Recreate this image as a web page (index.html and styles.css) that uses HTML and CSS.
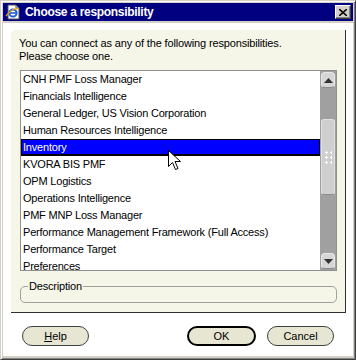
FILE: index.html
```html
<!DOCTYPE html>
<html lang="en">
<head>
    <meta charset="UTF-8">
    <title>Choose a responsibility</title>
    <link rel="stylesheet" href="styles.css">
</head>
<body>

    <div class="window">
        <!-- Title bar -->
        <div class="titlebar">
            <svg class="app-icon" width="16" height="16" viewBox="0 0 16 16">
                <path d="M3 1h8l3 3v11H3z" fill="#fff" stroke="#555" stroke-width="1"/>
                <path d="M11 1v3h3" fill="none" stroke="#555" stroke-width="1"/>
                <circle cx="8" cy="9" r="3.6" fill="none" stroke="#1a5fd6" stroke-width="2"/>
                <path d="M4.6 9h6.8" stroke="#1a5fd6" stroke-width="1.6"/>
                <path d="M1 12c3-4 9-9 13-7" fill="none" stroke="#e8a317" stroke-width="1.3"/>
            </svg>
            <span class="title">Choose a responsibility</span>
            <div class="close-btn">
                <svg width="8" height="7" viewBox="0 0 8 7">
                    <path d="M0 0l8 7M8 0l-8 7" stroke="#000" stroke-width="1.6"/>
                </svg>
            </div>
        </div>

        <div class="client">
            <div class="panel">
                <p class="prompt">You can connect as any of the following responsibilities.<br>Please choose one.</p>

                <div class="listbox">
                    <ul class="items">
                        <li>CNH PMF Loss Manager</li>
                        <li>Financials Intelligence</li>
                        <li>General Ledger, US Vision Corporation</li>
                        <li>Human Resources Intelligence</li>
                        <li class="selected">Inventory</li>
                        <li>KVORA BIS PMF</li>
                        <li>OPM Logistics</li>
                        <li>Operations Intelligence</li>
                        <li>PMF MNP Loss Manager</li>
                        <li>Performance Management Framework (Full Access)</li>
                        <li>Performance Target</li>
                        <li>Preferences</li>
                    </ul>
                    <div class="scrollbar">
                        <div class="arrow-btn">
                            <svg width="9" height="5" viewBox="0 0 9 5"><path d="M0 5L4.5 0L9 5z" fill="#333"/></svg>
                        </div>
                        <div class="track-top"></div>
                        <div class="thumb">
                            <span class="grip"></span>
                        </div>
                        <div class="track-bottom"></div>
                        <div class="arrow-btn">
                            <svg width="9" height="5" viewBox="0 0 9 5"><path d="M0 0L4.5 5L9 0z" fill="#333"/></svg>
                        </div>
                    </div>

                    <!-- mouse pointer -->
                    <svg class="pointer" width="13" height="20" viewBox="0 0 13 20">
                        <path d="M0.5 0.5V16.5L4.5 12.5L7.5 19.5L10 18.5L7 11.5H12.5Z" fill="#fff" stroke="#000" stroke-width="1"/>
                    </svg>
                </div>

                <fieldset class="description">
                    <legend>Description</legend>
                </fieldset>
            </div>

            <div class="buttons">
                <button class="btn"><u>H</u>elp</button>
                <div class="btn-space"></div>
                <button class="btn btn-default">OK</button>
                <button class="btn">Cancel</button>
            </div>
        </div>
    </div>

</body>
</html>
```

FILE: styles.css
```css
body {
    margin: 0;
    font-family: "Liberation Sans", Arial, sans-serif;
    font-size: 11px;
    background: #d4d0c8;
}

/* Window frame */
.window {
    box-sizing: border-box;
    width: 356px;
    height: 360px;
    background: #d4d0c8;
    border: 1px solid;
    border-color: #d4d0c8 #404040 #404040 #d4d0c8;
    box-shadow: inset 1px 1px #fff, inset -1px -1px #808080;
    padding: 2px 2px 3px 2px;
    display: flex;
    flex-direction: column;
}

.titlebar {
    height: 18px;
    background: #000080;
    display: flex;
    align-items: center;
    padding: 0 2px 0 2px;
}

.app-icon {
    margin-right: 4px;
}

.title {
    color: #fff;
    font-weight: bold;
    font-size: 12px;
    letter-spacing: -0.3px;
    flex: 1;
}

.close-btn {
    width: 16px;
    height: 14px;
    box-sizing: border-box;
    background: #d4d0c8;
    border: 1px solid;
    border-color: #fff #404040 #404040 #fff;
    box-shadow: inset -1px -1px #808080;
    display: flex;
    align-items: center;
    justify-content: center;
}

.client {
    flex: 1;
    margin-top: 2px;
    background: #fff;
    display: flex;
    flex-direction: column;
}

/* Cream panel */
.panel {
    margin: 7px 7px 0 8px;
    height: 283px;
    box-sizing: border-box;
    background: #f5f5e8;
    border-right: 1px solid #303030;
    border-bottom: 1px solid #303030;
    border-radius: 5px 0 0 0;
    padding: 7px 8px 0 8px;
}

.prompt {
    margin: 0;
    line-height: 13px;
    letter-spacing: -0.15px;
    color: #000;
}

/* List */
.listbox {
    position: relative;
    margin: 7px 0 0 1px;
    height: 201px;
    box-sizing: border-box;
    background: #fff;
    border: 1px solid #909090;
    display: flex;
    overflow: hidden;
}

.items {
    list-style: none;
    margin: 0;
    padding: 0;
    flex: 1;
}

.items li {
    height: 17px;
    line-height: 17px;
    padding-left: 2px;
    font-size: 11px;
    letter-spacing: -0.2px;
    white-space: nowrap;
    box-sizing: border-box;
}

.items li.selected {
    background: #0000ff;
    color: #fff;
    border: 1px solid #000;
    border-bottom-width: 2px;
    line-height: 14px;
    padding-left: 1px;
}

.scrollbar {
    width: 16px;
    background: #a0a0a0;
    display: flex;
    flex-direction: column;
    padding: 1px 0;
    box-sizing: border-box;
}

.arrow-btn {
    height: 14px;
    margin: 0 1px;
    background: #d6d6d6;
    border-radius: 4px;
    border: 1px solid #e8e8e8;
    border-bottom-color: #8a8a8a;
    display: flex;
    align-items: center;
    justify-content: center;
}

.track-top {
    height: 31px;
}

.track-bottom {
    flex: 1;
}

.thumb {
    height: 74px;
    margin: 0 1px;
    background: #cfcfcf;
    border-radius: 3px;
    border: 1px solid #e0e0e0;
    border-bottom-color: #909090;
    display: flex;
    align-items: center;
    justify-content: center;
}

.grip {
    width: 8px;
    height: 14px;
    background-image: radial-gradient(circle, #fff 1px, transparent 1.2px);
    background-size: 5px 5px;
}

.pointer {
    position: absolute;
    left: 147px;
    top: 79px;
}

/* Description group */
.description {
    margin: 9px 0 0 1px;
    padding: 0;
    height: 23px;
    box-sizing: border-box;
    border: 1px solid #a0a0a0;
    border-radius: 5px;
}

.description legend {
    margin-left: 7px;
    padding: 0 1px;
    font-size: 11px;
    letter-spacing: -0.2px;
    line-height: 13px;
}

/* Buttons */
.buttons {
    display: flex;
    margin-top: 13px;
    padding: 0 19px;
    gap: 11px;
}

.btn-space {
    flex: 1;
}

.btn {
    height: 20px;
    width: 67px;
    box-sizing: border-box;
    background: #e6e6d2;
    border: 1px solid #404040;
    border-radius: 10px;
    font-family: "Liberation Sans", Arial, sans-serif;
    font-size: 11px;
    color: #000;
    padding: 0;
}

.btn-default {
    width: 69px;
    border: 2px solid #000;
}
```
